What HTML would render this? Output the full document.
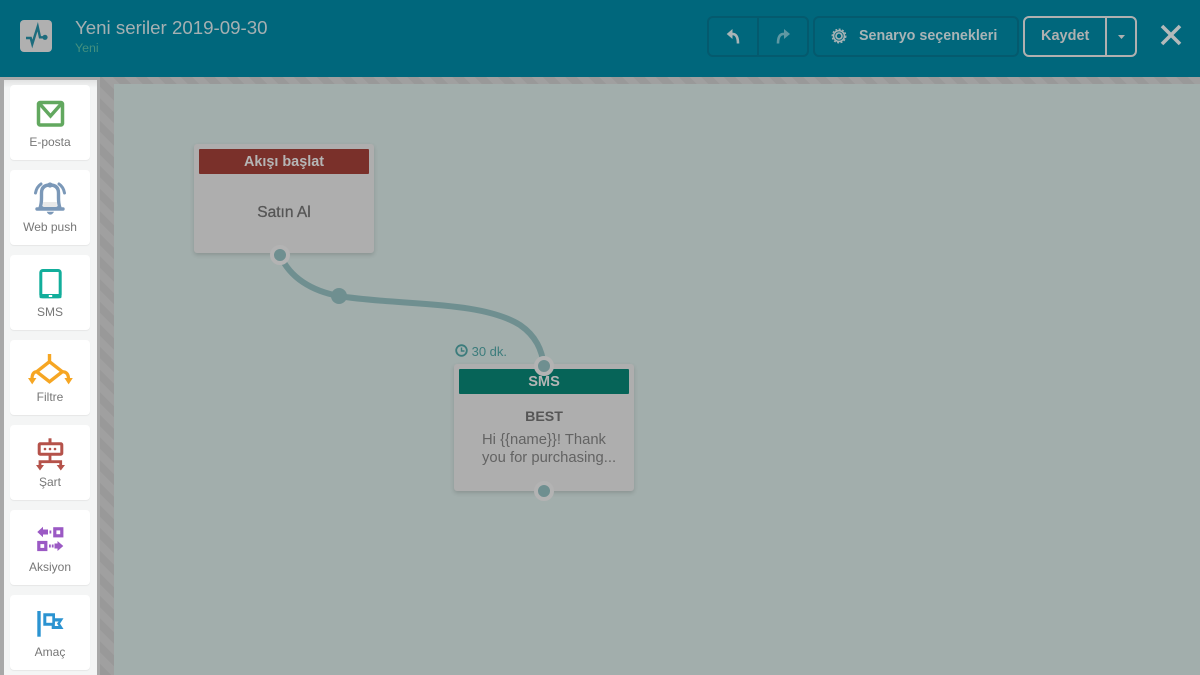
<!DOCTYPE html>
<html><head><meta charset="utf-8">
<style>
html,body{margin:0;padding:0;width:1200px;height:675px;overflow:hidden;background:#a2aeac;font-family:"Liberation Sans","DejaVu Sans",sans-serif}
div{box-sizing:border-box}
.abs{position:absolute}
#stripes{left:100px;top:77px;width:1100px;height:598px;background:repeating-linear-gradient(45deg,#999 0 8px,#a0a0a0 8px 16px)}
#canvas{left:114px;top:84px;width:1086px;height:591px;background:#a2aeac}
#left{left:0;top:77px;width:100px;height:598px;background:#a8a8a8}
#side{left:4px;top:80px;width:93px;height:595px;background:linear-gradient(#e2e3e3 0,#f4f5f5 8px)}
.item{position:absolute;left:10px;width:80px;height:75px;background:#fff;border-radius:4px;box-shadow:0 1px 1px rgba(0,0,0,.06)}
.lab{position:absolute;left:0;width:80px;text-align:center;font-size:12px;color:#777;line-height:14px;top:50px}
.item svg{position:absolute;left:0;top:0;width:80px;height:50px}
#head{left:0;top:0;width:1200px;height:77px;background:#00677c}
.btn{position:absolute;top:16px;height:41px;border:2px solid #045a6e;border-radius:6px}
.node{position:absolute;width:180px;background:#aeaeae;border-radius:3px;box-shadow:0 2px 4px rgba(0,0,0,.15)}
.bar{position:absolute;left:5px;top:5px;width:170px;height:25px;border-radius:1px;text-align:center;color:#b5b5b5;font-weight:bold;font-size:14.6px;line-height:26px}
.dot{position:absolute;width:20px;height:20px;border-radius:50%;background:#6f8f90;border:4px solid #b3b3b3}
</style></head><body>
<div class="abs" id="stripes"></div>
<div class="abs" id="canvas"></div>
<div class="abs" id="left"></div>
<div class="abs" id="side"></div>

<div class="item" style="top:85px"><svg viewBox="0 0 80 50"><rect x="28.5" y="17.5" width="24" height="22.5" rx="1.5" fill="#fff" stroke="#62a85f" stroke-width="3.5"/><path d="M29 18 L40.5 31 L52 18" fill="none" stroke="#62a85f" stroke-width="3.5"/></svg><div class="lab">E-posta</div></div>

<div class="item" style="top:170px"><svg viewBox="0 0 80 50"><path d="M30 38 Q31.5 34 31.5 28 V23 Q31.5 15 40 15 Q48.5 15 48.5 23 V28 Q48.5 34 50 38 Z" fill="#fff" stroke="#7b98b8" stroke-width="3.4" stroke-linejoin="round"/><rect x="33.2" y="32" width="13.6" height="5" fill="#e8e8e8"/><path d="M27 39 H53" stroke="#7b98b8" stroke-width="3.4" stroke-linecap="round"/><circle cx="40" cy="15" r="2.6" fill="#7b98b8"/><path d="M36.7 41.7 H44 Q42.5 44.6 40.3 44.6 Q38 44.6 36.7 41.7 Z" fill="#7b98b8"/><path d="M25.5 23 Q26.5 17 31 14 M54.5 23 Q53.5 17 49 14" fill="none" stroke="#7b98b8" stroke-width="3" stroke-linecap="round"/></svg><div class="lab">Web push</div></div>

<div class="item" style="top:255px"><svg viewBox="0 0 80 50"><rect x="30.8" y="15.5" width="19.4" height="26.3" rx="2" fill="#fff" stroke="#12ae9b" stroke-width="3"/><rect x="29.5" y="39" width="22" height="4.3" rx="1.5" fill="#12ae9b"/><rect x="38.8" y="40" width="3.4" height="2" fill="#fff"/></svg><div class="lab">SMS</div></div>

<div class="item" style="top:340px"><svg viewBox="0 0 80 50"><path d="M39.5 14 V21.7 M39.5 21.7 L52.3 31.7 L39.5 41.7 L26.7 31.7 Z" fill="none" stroke="#f6a623" stroke-width="3.4"/><path d="M27 31.7 Q22 31.7 22 39 M52 31.7 Q58.5 31.7 58.5 39" fill="none" stroke="#f6a623" stroke-width="3.2"/><path d="M18 38 H26.4 L22.2 44.4 Z M54.4 38 H62.8 L58.6 44.4 Z" fill="#f6a623"/></svg><div class="lab">Filtre</div></div>

<div class="item" style="top:425px"><svg viewBox="0 0 80 50"><path d="M40 13.3 V18" stroke="#b5524a" stroke-width="3"/><rect x="29.2" y="18.8" width="22.6" height="10.4" rx="1" fill="#fff" stroke="#b5524a" stroke-width="3"/><circle cx="35" cy="24" r="1.3" fill="#b5524a"/><circle cx="40" cy="24" r="1.3" fill="#b5524a"/><circle cx="45" cy="24" r="1.3" fill="#b5524a"/><path d="M40 30 V36.5 M30 41 V36.7 H50.7 V41" fill="none" stroke="#b5524a" stroke-width="2.8"/><path d="M26 40 H34 L30 45.5 Z M46.7 40 H55 L50.8 45.5 Z" fill="#b5524a"/></svg><div class="lab">Şart</div></div>

<div class="item" style="top:510px"><svg viewBox="0 0 80 50"><path d="M27.3 22 L33 16.7 V19.5 H38 V24.5 H33 V27.3 Z" fill="#9b59c4"/><path d="M39.5 20.5 h1.8 v3 h-1.8z" fill="#9b59c4"/><rect x="44.8" y="18.8" width="7" height="7" fill="#fff" stroke="#9b59c4" stroke-width="3.2"/><rect x="28.8" y="32.5" width="7" height="7" fill="#fff" stroke="#9b59c4" stroke-width="3.2"/><path d="M39 34.5 h1.8 v3 h-1.8z M41.8 34.5 h1.8 v3 h-1.8z" fill="#9b59c4"/><path d="M44.5 33.5 H47.5 V31 L53.3 36 L47.5 41 V38.5 H44.5 Z" fill="#9b59c4"/></svg><div class="lab">Aksiyon</div></div>

<div class="item" style="top:595px"><svg viewBox="0 0 80 50"><rect x="27.3" y="16" width="3.4" height="25.7" fill="#2b93d1"/><path d="M33.3 18.3 H45 V23.3 H53.5 L50 28.6 L53.5 34 H41.7 V30.7 H33.3 Z" fill="#2b93d1"/><rect x="36.3" y="21.3" width="6" height="6.5" fill="#fff"/><path d="M45 26.5 H48.6 L47 28.6 L48.6 31 H44.8 Z" fill="#fff"/></svg><div class="lab">Amaç</div></div>

<div class="abs" id="head"></div>
<div class="abs" style="left:20px;top:20px;width:32px;height:32px;background:#b0b0b0;border-radius:4px"><svg width="32" height="32" viewBox="0 0 32 32"><path d="M6 18 H10.7 L12.3 24 L17.7 6.7 L20 17.3 H25" fill="none" stroke="#1d6c7d" stroke-width="2.4"/><circle cx="25" cy="17.3" r="2.6" fill="#1d6c7d"/></svg></div>
<div class="abs" style="left:75px;top:16px;font-size:18.7px;line-height:24px;color:#a6b0b2;white-space:nowrap">Yeni seriler 2019-09-30</div>
<div class="abs" style="left:75px;top:41px;font-size:12.4px;line-height:14px;color:#44907f">Yeni</div>

<div class="btn" style="left:707px;width:102px"></div>
<div class="abs" style="left:757px;top:16px;width:2px;height:41px;background:#045a6e"></div>
<svg class="abs" style="left:722px;top:24px" width="24" height="24" viewBox="0 0 24 24"><path d="M9 10 H11 Q16 10.5 16 19.5" fill="none" stroke="#a9b4b6" stroke-width="2.6"/><path d="M10.5 5 L4.7 10 L10.5 15 Z" fill="#a9b4b6"/></svg>
<svg class="abs" style="left:771px;top:24px" width="24" height="24" viewBox="0 0 24 24"><path d="M14 10 H12 Q7 10.5 7 19.5" fill="none" stroke="#5f98a3" stroke-width="2.6"/><path d="M13 5 L19 10 L13 15 Z" fill="#5f98a3"/></svg>
<div class="btn" style="left:813px;width:206px"></div>
<svg class="abs" style="left:830px;top:27px" width="18" height="18" viewBox="0 0 18 18"><circle cx="9" cy="9" r="3" fill="none" stroke="#a9b4b6" stroke-width="1.6"/><circle cx="9" cy="9" r="5.4" fill="none" stroke="#a9b4b6" stroke-width="1.5"/><circle cx="9" cy="9" r="6.8" fill="none" stroke="#a9b4b6" stroke-width="1.3" stroke-dasharray="2 1.5"/></svg>
<div class="abs" style="left:859px;top:27px;font-size:14.3px;line-height:18px;font-weight:bold;color:#a9b4b6;white-space:nowrap">Senaryo seçenekleri</div>
<div class="btn" style="left:1023px;width:114px;border-color:#b0b0b0"></div>
<div class="abs" style="left:1105px;top:16px;width:2px;height:41px;background:#b0b0b0"></div>
<div class="abs" style="left:1041px;top:27px;font-size:14.5px;line-height:18px;font-weight:bold;color:#b0b0b0">Kaydet</div>
<svg class="abs" style="left:1117px;top:35px" width="9" height="5"><path d="M1 0 H8 L4.5 4 Z" fill="#b0b0b0"/></svg>
<svg class="abs" style="left:1159px;top:23px" width="24" height="24" viewBox="0 0 24 24"><path d="M3 3 L21 21 M21 3 L3 21" stroke="#b3b9ba" stroke-width="3.6"/></svg>

<svg class="abs" style="left:0;top:0" width="1200" height="675"><path d="M280 255 C290 278 312 291 339 296 C400 306 480 300 520 325 C536 336 542 350 544 366" fill="none" stroke="#6f8f90" stroke-width="6"/><circle cx="339" cy="296" r="8" fill="#6f8f90"/></svg>

<div class="node" style="left:194px;top:144px;height:109px">
<div class="bar" style="background:#7a302a;font-size:14.4px">Akışı başlat</div>
<div class="abs" style="left:0;width:180px;top:60px;text-align:center;font-size:15.5px;line-height:18px;color:#565656;-webkit-text-stroke:.3px #565656">Satın Al</div>
</div>
<div class="dot" style="left:270px;top:245px"></div>

<div class="abs" style="left:455px;top:344px;color:#3c7c7c;font-size:13px;line-height:15px;white-space:nowrap"><svg width="13" height="13" viewBox="0 0 13 13" style="vertical-align:-1px"><circle cx="6.5" cy="6.5" r="5.3" fill="none" stroke="#3c7c7c" stroke-width="1.8"/><path d="M6.5 3.5 V7 H9.5" fill="none" stroke="#3c7c7c" stroke-width="1.4"/></svg> 30 dk.</div>
<div class="node" style="left:454px;top:364px;height:127px">
<div class="bar" style="background:#066458">SMS</div>
<div class="abs" style="left:0;width:180px;top:44px;text-align:center;font-size:14.2px;line-height:18px;font-weight:bold;color:#565656">BEST</div>
<div class="abs" style="left:28px;top:67px;font-size:14.8px;line-height:18px;color:#636363;white-space:nowrap">Hi {{name}}! Thank<br>you for purchasing...</div>
</div>
<div class="dot" style="left:534px;top:356px"></div>
<div class="dot" style="left:534px;top:481px"></div>
</body></html>
